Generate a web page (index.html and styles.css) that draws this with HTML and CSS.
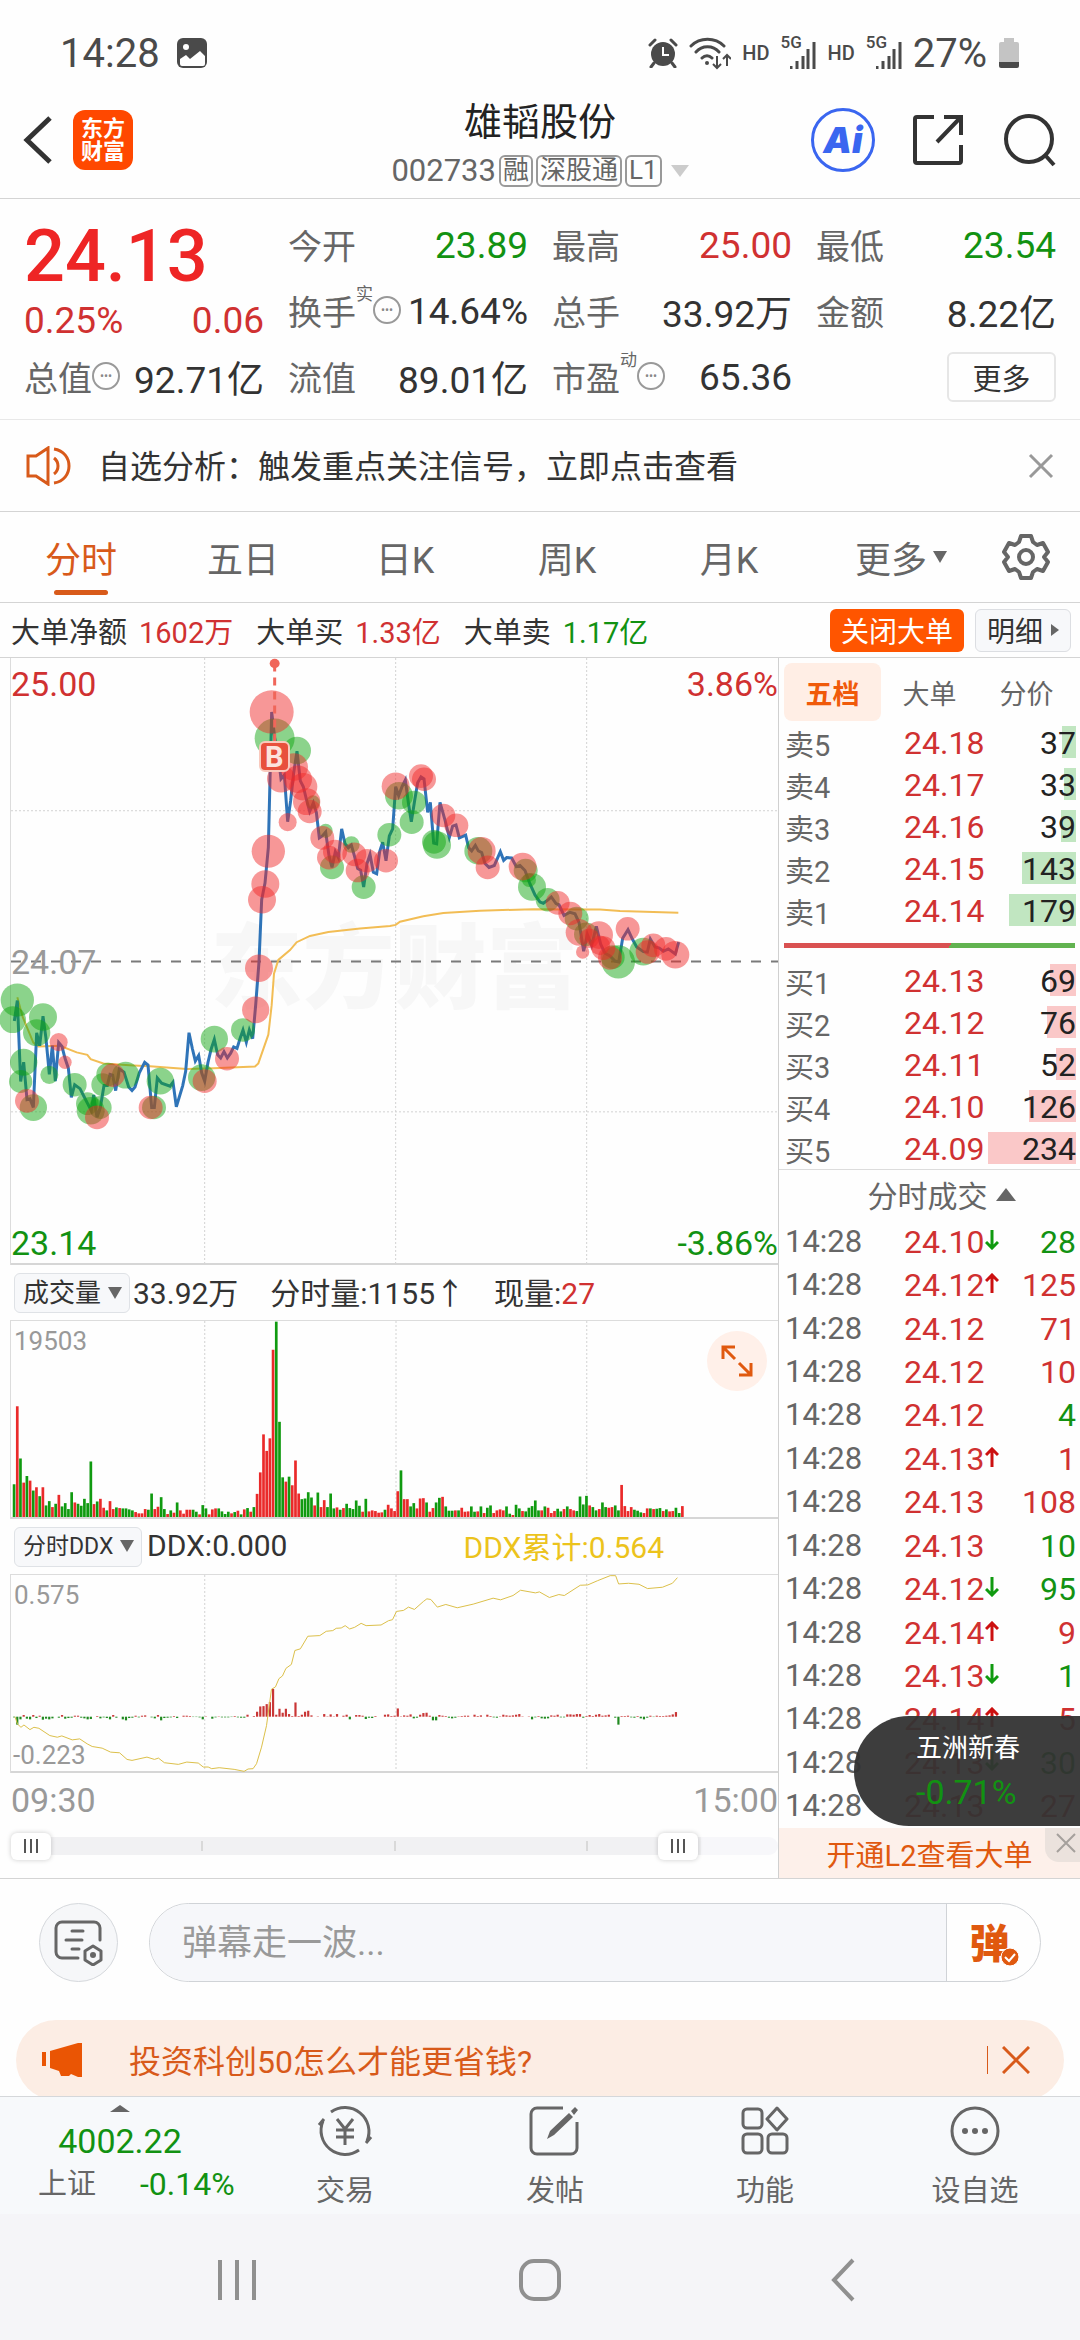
FILE: index.html
```html
<!DOCTYPE html>
<html lang="zh-CN">
<head>
    <meta charset="UTF-8">
    <meta name="viewport" content="width=device-width, initial-scale=1.0">
    <title>雄韬股份 002733</title>
    <link rel="stylesheet" href="styles.css">
</head>
<body>

    <div class="status-bar">
        <div class="status-left">
            <span>14:28</span>
            <svg width="32" height="32" viewBox="0 0 32 32"><rect x="1" y="1" width="30" height="30" rx="6" fill="#4a4a4a"/><circle cx="10" cy="10" r="3" fill="#fff"/><path d="M4 22l6-4 4 4 10-8 5 5v8a2 2 0 0 1-2 2H6a2 2 0 0 1-2-2z" fill="#fff"/></svg>
        </div>
        <div class="status-right">
            <svg width="30" height="30" viewBox="0 0 30 30"><circle cx="15" cy="16" r="12" fill="#4a4a4a"/><path d="M2 7l5-5M28 7l-5-5M6 25l-3 4M24 25l3 4" stroke="#4a4a4a" stroke-width="3" stroke-linecap="round"/><path d="M15 9v8h6" fill="none" stroke="#fff" stroke-width="2"/></svg>
            <svg width="42" height="34" viewBox="0 0 42 34"><g fill="none" stroke="#4a4a4a" stroke-width="3" stroke-linecap="round"><path d="M2 10c9-9 24-9 33 0M7 16c6-7 17-7 23 0M13 22c3-3 7-3 10 0"/></g><circle cx="18" cy="27" r="2" fill="#4a4a4a"/><path d="M28 20v12M24 28l4 4 4-4M38 30V19M34 23l4-4 4 4" fill="none" stroke="#4a4a4a" stroke-width="2"/></svg>
            <span class="hd">HD</span>
            <span class="signal"><span>5G</span><svg width="26" height="28" viewBox="0 0 26 28"><path d="M1 25v3M7 20v8M13 15v13M18 8v20M24 1v27" stroke="#4a4a4a" stroke-width="3"/></svg></span>
            <span class="hd">HD</span>
            <span class="signal"><span>5G</span><svg width="26" height="28" viewBox="0 0 26 28"><path d="M1 25v3M7 20v8M13 15v13M18 8v20M24 1v27" stroke="#4a4a4a" stroke-width="3"/></svg></span>
            <span>27%</span>
            <svg width="22" height="32" viewBox="0 0 22 32"><path d="M6 1h10v4h3a2 2 0 0 1 2 2v18H1V7a2 2 0 0 1 2-2h3z" fill="#c4c4c4"/><path d="M1 25h20v4a2 2 0 0 1-2 2H3a2 2 0 0 1-2-2z" fill="#4a4a4a"/></svg>
        </div>
    </div>

    <header class="header">
        <div class="header-left">
            <button class="icon-btn" aria-label="返回"><svg width="30" height="52" viewBox="0 0 30 52"><path d="M27 4L4 26l23 22" fill="none" stroke="#333" stroke-width="5"/></svg></button>
            <a class="logo" href="#">东方<br>财富</a>
        </div>
        <div class="stock-title">
            <h1>雄韬股份</h1>
            <p><span>002733</span><span class="tag">融</span><span class="tag">深股通</span><span class="tag">L1</span><i class="tri-down light"></i></p>
        </div>
        <div class="header-right">
            <button class="ai-btn">Ai</button>
            <button class="icon-btn" aria-label="分享"><svg width="52" height="52" viewBox="0 0 52 52"><path d="M21 3H4a2 2 0 0 0-2 2v42a2 2 0 0 0 2 2h42a2 2 0 0 0 2-2V31M31 3h17v18M48 3L24 28" fill="none" stroke="#333" stroke-width="4"/></svg></button>
            <button class="icon-btn" aria-label="搜索"><svg width="54" height="54" viewBox="0 0 54 54"><circle cx="26" cy="26" r="23" fill="none" stroke="#333" stroke-width="4"/><path d="M42 42l9 10" stroke="#333" stroke-width="4"/></svg></button>
        </div>
    </header>

    <section class="quote">
        <div class="price-box">
            <div class="price">24.13</div>
            <div class="change"><span>0.25%</span><span>0.06</span></div>
        </div>
        <div class="item"><span>今开</span><b class="green">23.89</b></div>
        <div class="item"><span>最高</span><b class="red">25.00</b></div>
        <div class="item"><span>最低</span><b class="green">23.54</b></div>
        <div class="item"><span>换手<sup>实</sup><i class="dots">•••</i></span><b>14.64%</b></div>
        <div class="item"><span>总手</span><b>33.92万</b></div>
        <div class="item"><span>金额</span><b>8.22亿</b></div>
        <div class="item"><span>总值<i class="dots">•••</i></span><b>92.71亿</b></div>
        <div class="item"><span>流值</span><b>89.01亿</b></div>
        <div class="item"><span>市盈<sup>动</sup><i class="dots">•••</i></span><b>65.36</b></div>
        <div class="item end"><button class="more-btn">更多</button></div>
    </section>

    <section class="notice">
        <svg width="46" height="40" viewBox="0 0 46 40"><g fill="none" stroke="#d85a1a" stroke-width="3"><path d="M2 10h8L22 2v36L10 30H2zM28 12a10 10 0 0 1 0 16M28 3c20 3 20 31 0 34"/></g></svg>
        <a href="#">自选分析：触发重点关注信号，立即点击查看</a>
        <button class="icon-btn" aria-label="关闭"><svg width="26" height="26" viewBox="0 0 26 26"><path d="M2 2l22 22M24 2L2 24" stroke="#999" stroke-width="3"/></svg></button>
    </section>

    <nav class="tabs">
        <button class="active">分时</button>
        <button>五日</button>
        <button>日K</button>
        <button>周K</button>
        <button>月K</button>
        <button class="tab-more">更多<i class="tri-down small"></i></button>
        <button aria-label="设置"><svg width="48" height="48" viewBox="0 0 48 48"><g fill="none" stroke="#666" stroke-width="4" stroke-linejoin="round"><path d="M19 3h10l2 6 4 3 6-2 5 9-4 5 4 5-5 9-6-2-4 3-2 6H19l-2-6-4-3-6 2-5-9 4-5-4-5 5-9 6 2 4-3z"/><circle cx="24" cy="24" r="7"/></g></svg></button>
    </nav>

    <div class="big-order">
        <span>大单净额</span><em class="red">1602万</em>
        <span>大单买</span><em class="red">1.33亿</em>
        <span>大单卖</span><em class="green">1.17亿</em>
        <button class="close-order">关闭大单</button>
        <button class="detail">明细<i class="tri-right"></i></button>
    </div>

    <main class="main">
        <div class="charts">
            <div class="chart price-chart">
                <div class="watermark">东方财富</div>
                <svg id="price-svg" viewBox="33 18 2301 1537" preserveAspectRatio="none">
                    <g class="grid"><path d="M614 18V1555M1187 18V1555M1760 18V1555M33 406H2334M33 1171H2334"/></g>
                    <path class="middle" d="M33 789H2334"/>
                    <polyline id="avg-line"/>
                    <polyline id="price-line"/>
                    <g id="bubbles"></g>
                    <path class="mark-line" d="M824 32V232"/>
                    <ellipse cx="824" cy="32" rx="15" ry="12" fill="#f0665a"/>
                </svg>
                <span class="mark">B</span>
                <span class="label top left red">25.00</span>
                <span class="label top right red">3.86%</span>
                <span class="label mid left">24.07</span>
                <span class="label bottom left green">23.14</span>
                <span class="label bottom right green">-3.86%</span>
            </div>

            <div class="sub-head">
                <div class="select"><select aria-label="指标一"><option>成交量</option></select></div>
                <span>33.92万</span>
                <span class="volume-now">分时量:1155↑</span>
                <span class="volume-last">现量:<em class="red">27</em></span>
            </div>
            <div class="chart sub-chart">
                <svg id="volume-svg" viewBox="22 181 1540 593" preserveAspectRatio="none">
                    <g class="grid"><path d="M411 181V774M795 181V774M1178 181V774"/></g>
                </svg>
                <span class="small-label first">19503</span>
                <button class="expand" aria-label="放大"><svg width="32" height="32" viewBox="0 0 32 32"><path d="M2 14V2h12M3 3l11 11M30 18v12H18M29 29L18 18" fill="none" stroke="#e0590f" stroke-width="3"/></svg></button>
            </div>

            <div class="sub-head">
                <div class="select narrow"><select aria-label="指标二"><option>分时DDX</option></select></div>
                <span>DDX:0.000</span>
                <span class="ddx-sum">DDX累计:0.564</span>
            </div>
            <div class="chart sub-chart">
                <svg id="ddx-svg" viewBox="22 -20 1540 592" preserveAspectRatio="none">
                    <g class="grid"><path d="M411 -20V572M795 -20V572M1178 -20V572"/></g>
                    <g id="ddx-bars"></g>
                    <polyline id="ddx-line"/>
                </svg>
                <span class="small-label">0.575</span>
                <span class="small-label last">-0.223</span>
            </div>

            <div class="time-axis"><span>09:30</span><span>15:00</span></div>
            <div class="range">
                <div class="track"><i></i><i></i><i></i></div>
                <input type="range" min="0" max="100" value="0" aria-label="开始时间">
                <input type="range" min="0" max="100" value="89" aria-label="结束时间">
            </div>
        </div>

        <aside class="side">
            <div class="side-tabs">
                <button class="active">五档</button>
                <button>大单</button>
                <button>分价</button>
            </div>
            <table class="book" id="sell"></table>
            <div class="ratio"></div>
            <table class="book buy" id="buy"></table>
            <button class="trade-title">分时成交<i class="tri-up"></i></button>
            <div class="trades">
                <table id="trades"></table>
            </div>
            <div class="l2">
                <a href="#">开通L2查看大单</a>
                <button aria-label="关闭"><svg width="20" height="20" viewBox="0 0 20 20"><path d="M1 1l18 18M19 1L1 19" stroke="#a5a09c" stroke-width="2"/></svg></button>
            </div>
            <a class="float" href="#"><span>五洲新春</span><b>-0.71%</b></a>
        </aside>
    </main>

    <form class="comment">
        <button type="button" class="round" aria-label="弹幕设置"><svg width="50" height="46" viewBox="0 0 50 46"><g fill="none" stroke="#666" stroke-width="3" stroke-linecap="round"><path d="M24 38H8a6 6 0 0 1-6-6V8a6 6 0 0 1 6-6h32a6 6 0 0 1 6 6v12M18 11h11M12 20h16M18 29h7"/><path d="M39 26l8 5v9l-8 5-8-5v-9z" stroke-linejoin="round"/></g><circle cx="39" cy="35" r="3" fill="#666"/></svg></button>
        <div class="comment-box">
            <input type="text" placeholder="弹幕走一波..." aria-label="弹幕">
            <button type="button" class="danmu">弹<svg width="20" height="20" viewBox="0 0 20 20"><circle cx="10" cy="10" r="9" fill="#e0590f" stroke="#fff"/><path d="M5 10l4 4 6-7" fill="none" stroke="#fff" stroke-width="2"/></svg></button>
        </div>
    </form>

    <div class="promo-wrap">
        <div class="promo">
            <svg width="42" height="36" viewBox="0 0 42 36"><path d="M2 10v14" stroke="#ea5504" stroke-width="4"/><path d="M8 9L36 1h4v34h-4l-7-3-2 2h-8l-2-5-9-3z" fill="#ea5504"/></svg>
            <a href="#">投资科创50怎么才能更省钱?</a>
            <button aria-label="关闭"><svg width="28" height="28" viewBox="0 0 28 28"><path d="M1 1l26 26M27 1L1 27" stroke="#d85a1a" stroke-width="3"/></svg></button>
        </div>
    </div>

    <nav class="bottom-nav">
        <a class="index" href="#">
            <i class="tri-up tiny"></i>
            <b>4002.22</b>
            <span>上证<em>-0.14%</em></span>
        </a>
        <a href="#">
            <svg width="58" height="52" viewBox="0 0 58 52"><g fill="none" stroke="#666" stroke-width="3"><path d="M15 7a24 24 0 0 1 36 29M50 38l5-6M43 45A24 24 0 0 1 7 16M8 14l-5 6"/><path d="M21 14l8 10 8-10M29 24v16M20 25h18M20 32h18"/></g></svg>
            <span>交易</span>
        </a>
        <a href="#">
            <svg width="52" height="52" viewBox="0 0 52 52"><path d="M34 3H8a6 6 0 0 0-6 6v34a6 6 0 0 0 6 6h34a6 6 0 0 0 6-6V17" fill="none" stroke="#666" stroke-width="3"/><path d="M42 6l4-4 3 3-4 5zM18 34l3-8L40 8l4 4-19 18z" fill="#666"/></svg>
            <span>发帖</span>
        </a>
        <a href="#">
            <svg width="48" height="52" viewBox="0 0 48 52"><g fill="none" stroke="#666" stroke-width="3"><rect x="2" y="4" width="19" height="19" rx="4"/><rect x="2" y="29" width="19" height="19" rx="4"/><rect x="27" y="29" width="19" height="19" rx="4"/><path d="M36 3l10 11-10 11-10-11z" stroke-linejoin="round"/></g></svg>
            <span>功能</span>
        </a>
        <a href="#">
            <svg width="52" height="52" viewBox="0 0 52 52"><circle cx="26" cy="26" r="23" fill="none" stroke="#666" stroke-width="3"/><g fill="#666"><circle cx="16" cy="26" r="3"/><circle cx="26" cy="26" r="3"/><circle cx="36" cy="26" r="3"/></g></svg>
            <span>设自选</span>
        </a>
    </nav>

    <div class="system-nav">
        <button aria-label="最近任务"><svg width="40" height="42" viewBox="0 0 40 42"><path d="M3 1v40M20 1v40M37 1v40" stroke="#909090" stroke-width="4"/></svg></button>
        <button aria-label="主页"><svg width="44" height="44" viewBox="0 0 44 44"><rect x="3" y="3" width="38" height="38" rx="13" fill="none" stroke="#909090" stroke-width="4"/></svg></button>
        <button aria-label="返回"><svg width="26" height="44" viewBox="0 0 26 44"><path d="M23 2L4 22l19 20" fill="none" stroke="#909090" stroke-width="4"/></svg></button>
    </div>

    <script src="script.js"></script>
</body>
</html>
```
FILE: styles.css
```css
* {
    box-sizing: border-box;
}
body {
    margin: 0;
    background: #fefefe;
    color: #333;
    font-family: Roboto, "Noto Sans CJK SC", sans-serif;
}
button {
    border: none;
    padding: 0;
    background: none;
    color: inherit;
    font-family: inherit;
    cursor: pointer;
}
a {
    color: inherit;
    text-decoration: none;
}
em, i, b {
    font-style: normal;
    font-weight: normal;
}
svg {
    display: block;
}
.red {
    color: #d03131;
}
.green {
    color: #129212;
}

/* triangles */
.tri-down, .tri-up, .tri-right {
    display: inline-block;
    border: 8px solid transparent;
}
.tri-down {
    border-top: 12px solid #666;
    border-bottom: none;
}
.tri-down.light {
    border-width: 12px 9px 0;
    border-top-color: #ccc;
    margin-left: 6px;
}
.tri-down.small {
    border-width: 12px 7px 0;
    margin-left: 6px;
}
.tri-up {
    border-bottom: 13px solid #666;
    border-top: none;
    border-left-width: 10px;
    border-right-width: 10px;
}
.tri-right {
    border-width: 6px 0 6px 8px;
    border-left-color: #666;
}

/* status bar */
.status-bar {
    display: flex;
    justify-content: space-between;
    align-items: center;
    height: 96px;
    padding: 10px 60px 0;
    color: #4a4a4a;
    font-size: 40px;
}
.status-left, .status-right {
    display: flex;
    align-items: center;
}
.status-left {
    gap: 16px;
}
.status-right {
    gap: 11px;
}
.hd {
    font-size: 20px;
    font-weight: 500;
}
.signal {
    position: relative;
    padding-left: 10px;
    padding-top: 4px;
}
.signal span {
    position: absolute;
    left: 0;
    top: -5px;
    font-size: 17px;
    font-weight: 500;
}

/* header */
.header {
    display: grid;
    grid-template-columns: 1fr auto 1fr;
    height: 103px;
    border-bottom: 1px solid #d4d4d4;
}
.header-left, .header-right {
    display: flex;
    align-items: center;
    height: 88px;
}
.header-left {
    padding-left: 23px;
    gap: 20px;
}
.header-right {
    justify-content: flex-end;
    padding-right: 23px;
    gap: 38px;
}
.logo {
    width: 60px;
    height: 60px;
    padding-top: 7px;
    border-radius: 12px;
    background: #ff4800;
    color: #fff;
    font-size: 22px;
    font-weight: bold;
    line-height: 23px;
    text-align: center;
}
.stock-title {
    text-align: center;
}
.stock-title h1 {
    margin: 0;
    color: #222;
    font-size: 38px;
    font-weight: normal;
    line-height: 52px;
}
.stock-title p {
    display: flex;
    align-items: center;
    justify-content: center;
    gap: 3px;
    margin: 0;
    color: #666;
    font-size: 31px;
    line-height: 46px;
}
.tag {
    height: 32px;
    padding: 0 2px;
    border: 2px solid #999;
    border-radius: 6px;
    font-size: 26px;
    line-height: 27px;
}
.ai-btn {
    width: 64px;
    height: 64px;
    border: 3px solid #3a66f0;
    border-radius: 50%;
    color: #3a66f0;
    font-family: Inter, sans-serif;
    font-size: 36px;
    font-style: italic;
    font-weight: 900;
}

/* quote */
.quote {
    display: grid;
    grid-template-columns: repeat(4, 1fr);
    grid-auto-rows: 66px;
    column-gap: 24px;
    padding: 13px 24px 9px;
    border-bottom: 1px solid #e8e8e8;
}
.price-box {
    grid-row: span 2;
    padding-top: 7px;
    color: #d03131;
}
.price {
    color: #ee2525;
    font-size: 72px;
    font-weight: 500;
    line-height: 76px;
}
.change {
    display: flex;
    justify-content: space-between;
    font-size: 37px;
    line-height: 52px;
}
.item {
    display: flex;
    align-items: center;
    justify-content: space-between;
    white-space: nowrap;
}
.item span {
    display: flex;
    align-items: center;
    padding-bottom: 2px;
    color: #666;
    font-size: 34px;
}
.item b {
    font-size: 37px;
}
.item sup {
    align-self: flex-start;
    font-size: 17px;
    line-height: 17px;
}
.dots {
    flex: none;
    width: 28px;
    height: 28px;
    border: 2px solid #999;
    border-radius: 50%;
    color: #888;
    font-size: 12px;
    line-height: 24px;
    text-align: center;
    display: flex;
    justify-content: center;
}
.item.end {
    justify-content: flex-end;
}
.more-btn {
    width: 109px;
    height: 50px;
    border: 2px solid #e6e6e6;
    border-radius: 6px;
    font-size: 29px;
}

/* notice */
.notice {
    display: flex;
    align-items: center;
    height: 92px;
    padding: 0 26px;
    border-bottom: 1px solid #d4d4d4;
    font-size: 32px;
}
.notice a {
    flex: 1;
    margin-left: 26px;
    padding-bottom: 4px;
}

/* period tabs */
.tabs {
    display: grid;
    grid-template-columns: repeat(6, 3fr) 2fr;
    height: 91px;
    border-bottom: 1px solid #d4d4d4;
}
.tabs button {
    position: relative;
    display: flex;
    align-items: center;
    justify-content: center;
    color: #666;
    font-size: 36px;
}
.tabs .tab-more {
    padding-left: 20px;
}
.tabs .active {
    color: #d85a1a;
}
.tabs .active::after {
    content: "";
    position: absolute;
    bottom: 7px;
    width: 54px;
    height: 5px;
    border-radius: 3px;
    background: #d85a1a;
}

.big-order {
    display: flex;
    align-items: center;
    height: 55px;
    padding: 0 9px 0 11px;
    border-bottom: 1px solid #d4d4d4;
    font-size: 29px;
}
.big-order em {
    margin: 0 23px 0 12px;
}
.big-order button {
    height: 43px;
    border-radius: 6px;
    font-size: 28px;
}
.close-order {
    margin-left: auto;
    width: 134px;
    background: #ff5500;
    color: #fff;
}
.detail {
    display: flex;
    align-items: center;
    justify-content: center;
    gap: 8px;
    width: 96px;
    margin-left: 11px;
    border: 1px solid #dcdee2;
    background: #f7f8fa;
}

/* charts */
.main {
    display: grid;
    grid-template-columns: minmax(0, 1fr) 302px;
    border-bottom: 1px solid #d4d4d4;
}
.charts {
    padding-left: 11px;
}
.chart {
    position: relative;
    border-bottom: 2px solid #d6d6d6;
    box-shadow: -1px 0 #dcdcdc;
}
.chart > svg {
    position: relative;
    width: 100%;
    height: 100%;
    overflow: visible;
}
.chart polyline, .chart > svg path {
    fill: none;
    vector-effect: non-scaling-stroke;
}
.grid path {
    stroke: #d2d2d2;
    stroke-dasharray: 2 2;
}
.price-chart {
    height: 607px;
    font-size: 34px;
}
.sub-chart {
    height: 199px;
    border-top: 1px solid #dcdcdc;
}
.middle {
    stroke: #7a7a7a;
    stroke-width: 2px;
    stroke-dasharray: 10 10;
}
#avg-line {
    stroke: #f2bd55;
    stroke-width: 2px;
}
#price-line {
    stroke: #2f74b8;
    stroke-width: 3px;
}
#ddx-line {
    stroke: #dcc04a;
    stroke-width: 1px;
}
.mark-line {
    stroke: #f0665a;
    stroke-width: 3px;
    stroke-dasharray: 8 6;
}
.mark {
    position: absolute;
    left: 34%;
    top: 16%;
    width: 31px;
    height: 31px;
    margin-left: -13px;
    margin-top: -14px;
    border: 2px solid #f9c9bd;
    border-radius: 6px;
    background: #e8503c;
    color: #fce3dd;
    font-size: 29px;
    font-weight: bold;
    line-height: 28px;
    text-align: center;
}
.watermark {
    position: absolute;
    inset: 0;
    display: flex;
    align-items: center;
    justify-content: center;
    color: #f7f7f7;
    font-size: 92px;
    font-weight: 900;
}
.label {
    position: absolute;
    line-height: 40px;
}
.label.left {
    left: 0;
}
.label.right {
    right: 0;
}
.label.top {
    top: 6px;
}
.label.mid {
    top: 50%;
    margin-top: -19px;
    color: #999;
}
.label.bottom {
    bottom: 0;
}
.small-label {
    position: absolute;
    left: 3px;
    top: 4px;
    color: #999;
    font-size: 26px;
    line-height: 32px;
}
.small-label.last {
    top: auto;
    bottom: 0;
    left: 2px;
}
.expand {
    position: absolute;
    top: 10px;
    right: 11px;
    display: flex;
    align-items: center;
    justify-content: center;
    width: 60px;
    height: 60px;
    border-radius: 50%;
    background: #fff0e9;
}
.sub-head {
    position: relative;
    display: flex;
    align-items: center;
    height: 55px;
    padding-left: 3px;
    font-size: 30px;
    white-space: nowrap;
}
.sub-head span {
    padding-bottom: 3px;
}
.select {
    position: relative;
    margin-right: 3px;
}
.select select {
    appearance: none;
    width: 116px;
    height: 40px;
    padding: 0 0 0 8px;
    border: 1px solid #dfe2e6;
    border-radius: 6px;
    background: #f7f8fa;
    color: #333;
    font-family: inherit;
    font-size: 26px;
}
.select.narrow {
    margin-right: 5px;
}
.select.narrow select {
    width: 128px;
    font-size: 23px;
}
.select::after {
    content: "";
    position: absolute;
    right: 8px;
    top: 14px;
    border: 7px solid transparent;
    border-top: 12px solid #666;
    border-bottom: none;
    pointer-events: none;
}
.volume-now {
    margin-left: 32px;
}
.volume-last {
    margin-left: 29px;
}
.ddx-sum {
    margin-left: auto;
    margin-right: 114px;
    color: #ecc31c;
}
.time-axis {
    display: flex;
    justify-content: space-between;
    color: #999;
    font-size: 34px;
    line-height: 54px;
}
.range {
    position: relative;
    height: 51px;
}
.track {
    display: flex;
    justify-content: space-evenly;
    align-items: center;
    position: absolute;
    left: 0;
    right: 0;
    top: 10px;
    height: 18px;
    border-radius: 9px;
    background: linear-gradient(to right, #f1f1f3 90%, #f7f7fa 90%);
}
.track i {
    width: 2px;
    height: 10px;
    background: #d9d9d9;
}
.range input {
    appearance: none;
    position: absolute;
    left: 0;
    top: 0;
    width: 100%;
    height: 38px;
    margin: 0;
    background: none;
    pointer-events: none;
}
.range input::-webkit-slider-thumb {
    appearance: none;
    width: 40px;
    height: 27px;
    border-radius: 6px;
    background:
        linear-gradient(#555, #555) 13px 6px / 2px 14px no-repeat,
        linear-gradient(#555, #555) 19px 6px / 2px 14px no-repeat,
        linear-gradient(#555, #555) 25px 6px / 2px 14px no-repeat,
        #fff;
    box-shadow: 0 0 5px rgba(0, 0, 0, 0.2);
    pointer-events: auto;
}

/* right side */
.side {
    position: relative;
    display: flex;
    flex-direction: column;
    border-left: 1px solid #d0d0d0;
}
.side-tabs {
    display: grid;
    grid-template-columns: repeat(3, 1fr);
    height: 63px;
    padding: 5px 5px 0;
}
.side-tabs button {
    border-radius: 8px;
    color: #666;
    font-size: 27px;
}
.side-tabs .active {
    background: #ffeee5;
    color: #f05a0a;
    font-weight: bold;
}
.side table {
    width: 100%;
    border-collapse: collapse;
    table-layout: fixed;
}
.side td {
    padding: 0;
}
.side td:first-child {
    width: 125px;
    padding-left: 6px;
    color: #666;
    white-space: nowrap;
}
.side td:nth-child(2) {
    width: 98px;
    white-space: nowrap;
}
.side td:last-child {
    padding-right: 4px;
    text-align: right;
}
.book td {
    height: 42px;
    color: #d03131;
    font-size: 32px;
    line-height: 32px;
}
.side .book td {
    padding-top: 2px;
}
.side .book td:first-child {
    padding-top: 8px;
    font-size: 29px;
}
.book .amount {
    position: relative;
    display: block;
    height: 32px;
    color: #222;
}
.book .amount i {
    position: absolute;
    right: 0;
    top: -1px;
    height: 32px;
    background: #c1e6c1;
}
.book.buy .amount i {
    background: #fac8c8;
}
.book .amount span {
    position: relative;
}
.ratio {
    height: 5px;
    margin: 12px 5px 11px;
    background: linear-gradient(120deg, #d95151 57%, #62b350 57%);
}
.trade-title {
    height: 51px;
    padding-left: 24px;
    padding-bottom: 2px;
    border-top: 1px solid #dcdcdc;
    color: #666;
    font-size: 30px;
}
.trade-title .tri-up {
    margin-left: 8px;
    vertical-align: 6px;
}
.trades {
    flex: 1;
}
.trades table {
    height: 100%;
}
.trades td {
    height: 43px;
    font-size: 32px;
    line-height: 36px;
}
.trades td:first-child {
    font-size: 31px;
}
.trades svg {
    display: inline-block;
    margin-left: 1px;
    vertical-align: 3px;
}
.l2 {
    position: relative;
    height: 50px;
    background: #fdf0ea;
    color: #e0590f;
    font-size: 29px;
    line-height: 56px;
    text-align: center;
}
.l2 button {
    position: absolute;
    top: 0;
    right: 0;
    width: 35px;
    height: 34px;
    padding: 0 0 4px 11px;
    border-bottom-left-radius: 14px;
    background: #ebe2dd;
}
.float {
    position: absolute;
    right: 0;
    bottom: 52px;
    width: 226px;
    height: 110px;
    padding: 10px 0 0 62px;
    border-radius: 55px 0 0 55px;
    background: rgba(51, 51, 51, 0.95);
    color: #fff;
    font-size: 26px;
    line-height: 44px;
}
.float b {
    display: block;
    color: #129212;
    font-size: 34px;
}

/* comment */
.comment {
    display: flex;
    gap: 31px;
    margin: 0;
    padding: 24px 39px 38px;
}
.round {
    display: flex;
    align-items: center;
    justify-content: center;
    width: 79px;
    height: 79px;
    border: 1px solid #d5d8dc;
    border-radius: 50%;
    background: #f6f7f9;
}
.comment-box {
    flex: 1;
    display: flex;
    height: 79px;
    overflow: hidden;
    border: 1px solid #d0d3d7;
    border-radius: 40px;
}
.comment-box input {
    flex: 1;
    min-width: 0;
    padding: 2px 32px 0;
    border: none;
    outline: none;
    background: #f6f7fa;
    font-family: inherit;
    font-size: 35px;
}
.comment-box input::placeholder {
    color: #999;
}
.danmu {
    position: relative;
    width: 94px;
    padding: 0 8px 4px 0;
    border-left: 1px solid #d0d3d7;
    color: #e0590f;
    font-size: 40px;
    font-weight: 900;
}
.danmu svg {
    position: absolute;
    right: 20px;
    bottom: 14px;
}

.promo-wrap {
    height: 76px;
    padding: 0 16px;
    overflow: hidden;
}
.promo {
    display: flex;
    align-items: center;
    height: 80px;
    padding: 0 34px 0 26px;
    border-radius: 40px;
    background: #fcede4;
    color: #d85a1a;
    font-size: 32px;
}
.promo a {
    flex: 1;
    margin-left: 45px;
    padding-bottom: 3px;
}
.promo button {
    padding-left: 14px;
    border-left: 1px solid #d85a1a;
}

/* bottom */
.bottom-nav {
    display: grid;
    grid-template-columns: 8fr repeat(4, 7fr);
    height: 118px;
    border-top: 1px solid #d5d7da;
    background: #f7f9fb;
}
.bottom-nav a {
    display: flex;
    flex-direction: column;
    align-items: center;
    padding-top: 8px;
    color: #666;
    font-size: 29px;
    line-height: 36px;
}
.bottom-nav svg {
    flex: none;
    margin-bottom: 16px;
}
.bottom-nav .index b {
    margin-top: 8px;
    color: #129212;
    font-size: 34px;
    line-height: 42px;
}
.index span {
    display: flex;
    align-items: center;
    align-self: flex-start;
    gap: 44px;
    padding-left: 38px;
    line-height: 44px;
    white-space: nowrap;
}
.index em {
    color: #129212;
    font-size: 32px;
}
.tri-up.tiny {
    border-bottom-width: 7px;
}
.system-nav {
    display: grid;
    grid-template-columns: repeat(3, 1fr);
    height: 126px;
    padding: 5px 85px 0;
    background: #f5f5f8;
}
.system-nav button {
    display: flex;
    align-items: center;
    justify-content: center;
}
```
FILE: script.js
```js
const RED = '#ea2a2a';
const GREEN = '#109a10';

const priceLine = '43,940 52,888 62,1094 71,1045 81,1140 90,1138 100,1160 110,970 119,1003 129,928 138,985 148,1076 157,1003 166,1093 176,995 186,1005 195,1035 205,1060 214,1134 224,1102 240,1112 252,1132 264,1152 274,1168 281,1128 291,1185 301,1160 312,1104 322,1104 330,1076 338,1078 347,1117 358,1062 372,1070 386,1108 396,1117 405,1108 418,1072 434,1045 444,1052 455,1160 463,1160 472,1085 485,1098 510,1106 519,1096 529,1158 548,1105 557,1068 567,970 577,1010 586,1042 596,1028 605,1072 614,1093 624,1045 634,1010 643,987 653,1026 662,1034 672,1018 682,1034 692,1022 701,1006 711,1010 720,985 729,963 739,994 748,963 758,985 767,900 777,790 785,632 795,590 805,500 815,155 824,220 834,260 843,325 853,315 863,434 872,380 881,310 891,255 901,330 910,345 920,380 929,408 940,386 949,410 958,475 967,470 977,460 987,520 996,550 1006,510 1015,525 1025,452 1035,490 1045,500 1054,493 1063,520 1073,553 1082,557 1091,600 1101,540 1110,517 1120,562 1130,566 1139,510 1148,486 1158,533 1168,470 1178,452 1187,345 1196,368 1206,345 1216,328 1225,385 1234,434 1244,380 1253,335 1263,320 1272,325 1283,410 1291,385 1301,488 1310,490 1320,385 1335,430 1348,474 1358,445 1368,442 1378,475 1397,468 1406,500 1415,508 1426,494 1435,508 1445,512 1455,540 1467,550 1483,545 1501,510 1511,532 1520,525 1535,526 1549,548 1560,545 1575,558 1590,592 1605,620 1620,638 1630,641 1645,632 1654,625 1668,642 1677,645 1692,672 1710,664 1725,668 1737,690 1743,720 1751,763 1762,720 1775,748 1789,700 1802,745 1815,768 1830,775 1845,788 1856,790 1868,730 1884,708 1897,732 1910,752 1930,764 1942,765 1951,732 1965,752 1978,755 1990,763 2005,757 2026,770 2036,740';
const avgLine = '52,880 68,930 100,995 115,1005 180,1003 230,1020 262,1026 272,1037 310,1048 400,1053 450,1055 560,1062 640,1060 765,1056 775,1048 805,975 815,900 822,820 835,785 870,760 890,740 930,724 985,714 1080,705 1170,699 1187,696 1200,688 1270,674 1330,666 1440,660 1600,656 1800,657 1860,661 2035,665';
const ddxLine = '30,408 35,430 42,440 48,433 60,447 68,440 78,443 100,465 115,470 124,466 145,478 160,475 175,490 185,498 205,503 222,515 240,517 255,537 265,540 295,530 310,537 318,533 330,547 358,552 375,545 398,548 408,560 418,560 425,565 440,562 470,567 490,573 498,566 508,565 515,550 525,500 535,435 545,325 553,318 560,293 567,285 574,262 585,250 592,208 603,203 618,165 642,163 655,150 668,148 675,141 685,140 693,133 702,143 712,138 725,126 735,133 765,131 780,118 788,115 796,90 810,87 820,77 832,84 850,60 857,52 865,54 878,77 895,69 918,79 950,68 990,50 1005,55 1030,42 1045,26 1075,34 1083,31 1103,48 1122,39 1133,42 1165,11 1180,10 1200,-3 1225,-18 1236,-18 1242,7 1262,5 1283,8 1300,21 1330,17 1350,5 1360,-12';

document.getElementById('price-line').setAttribute('points', priceLine);
document.getElementById('avg-line').setAttribute('points', avgLine);
document.getElementById('ddx-line').setAttribute('points', ddxLine);

// x, y, 半径
const greenBubbles = [[52,887,50],[38,937,40],[110,970,41],[129,930,42],[71,1045,41],[62,1094,35],[100,1160,41],[148,1077,27],[224,1102,36],[262,1150,34],[272,1168,42],[301,1160,34],[308,1102,34],[325,1076,36],[377,1078,41],[481,1093,41],[462,1160,36],[605,1084,41],[643,986,41],[729,963,36],[824,222,60],[891,253,42],[939,385,21],[977,457,21],[996,550,36],[1054,492,25],[1091,600,36],[1168,467,36],[1197,368,42],[1242,385,36],[1235,435,36],[1302,485,36],[1311,493,42],[1435,508,42],[1577,558,36],[1596,600,42],[1587,582,21],[1643,632,36],[1730,680,36],[1758,720,36],[1838,778,36],[1855,790,50],[1930,764,42]];
const redBubbles = [[81,1143,36],[176,994,27],[195,1045,20],[338,1078,36],[291,1185,36],[452,1160,36],[614,1093,36],[681,1036,36],[767,912,41],[777,806,42],[786,632,42],[796,592,42],[805,509,50],[815,155,66],[824,270,40],[843,325,42],[863,435,27],[882,295,42],[894,326,42],[910,345,42],[920,383,41],[929,408,36],[967,475,36],[987,525,36],[1005,510,36],[1063,517,36],[1073,558,36],[1101,533,36],[1158,533,36],[1187,344,42],[1263,318,36],[1272,326,36],[1330,418,36],[1369,443,36],[1445,508,42],[1463,550,36],[1568,548,42],[1673,640,36],[1711,667,36],[1737,715,40],[1748,765,20],[1768,730,30],[1797,722,42],[1800,748,30],[1810,755,36],[1830,780,36],[1883,706,36],[1943,765,36],[1960,748,36],[1998,757,36],[2026,772,42]];

function bubbles(list, color) {
    return list.map(b => `<ellipse cx="${b[0]}" cy="${b[1]}" rx="${b[2]}" ry="${Math.round(b[2] * 0.84)}" fill="${color}" fill-opacity="0.48"/>`).join('');
}
document.getElementById('bubbles').innerHTML = bubbles(greenBubbles, '#0ea50e') + bubbles(redBubbles, '#f02828');

// 成交量
const volume = 'g99 r335 g177 r104 g124 r110 g80 r90 g63 r90 g35 g48 r30 g40 r67 g32 g42 g24 g75 r44 g40 g34 g55 g42 g168 r39 g47 r55 r28 g20 r48 r24 g29 r27 g26 g26 g23 g20 r15 r11 r11 r24 g22 g71 r24 r31 g60 g24 r9 g20 r13 g44 r20 r10 r22 r22 g22 g16 r8 g36 g26 r8 r23 r26 g26 g17 g9 g16 r11 g15 r19 g8 r23 g27 r16 g30 r70 r135 r250 r200 r238 r506 g591 g288 g120 r107 g122 r96 r171 r71 g54 g56 g75 g59 r35 g74 r30 r51 g30 g71 g26 r29 g22 r27 g40 g27 g24 g50 g34 r16 g55 r17 r20 r18 r13 r14 g22 r37 r26 r18 r78 g141 r54 r54 g32 g42 r26 r56 r57 g44 r16 r27 g44 g58 r61 g32 g19 g19 r20 g20 r28 r16 r17 g32 g16 r17 g32 r12 g28 g35 r12 r20 r23 r20 g32 g10 r6 g37 g26 r18 g17 g28 g33 g50 g20 r20 g32 r28 r12 r18 g25 g17 r24 g32 r24 r20 g18 g62 g38 g64 r35 g30 g20 r24 g44 g30 r28 r30 g35 g20 r97 r33 r18 r30 g22 g19 g14 r12 r26 g26 r24 g25 g27 r18 g23 r17 r18 g28 g12 r33'.split(' ');
document.getElementById('volume-svg').insertAdjacentHTML('beforeend', volume.map((v, i) => {
    const h = Number(v.slice(1));
    return `<rect x="${(25.5 + i * 6.42).toFixed(1)}" y="${774 - h}" width="5.4" height="${h}" fill="${v[0] === 'r' ? RED : GREEN}"/>`;
}).join(''));

// DDX
const ddx = [-2,-24,-8,5,-6,-8,5,-4,3,-9,-6,-8,-5,0,-3,5,-6,-4,-3,3,3,-3,-5,-8,-7,0,2,-5,-2,-4,-8,5,-3,0,-8,-11,-4,-3,3,-2,3,4,0,-2,-5,5,-11,-4,-3,-2,2,-4,0,3,3,2,-1,-1,-2,-8,1,0,-6,-2,1,-2,-2,-2,-1,2,-2,-3,-3,6,0,2,15,31,32,38,44,84,6,24,12,24,8,2,43,2,6,15,18,4,0,1,0,8,1,7,1,8,0,3,6,-8,0,5,5,3,-7,-3,-4,2,0,0,6,7,2,3,25,1,4,3,7,-5,-3,6,11,12,3,-11,-11,5,3,2,-3,-5,-3,1,2,3,3,0,6,2,4,0,6,2,-2,-3,1,6,4,3,4,6,8,1,0,1,-8,-2,2,-5,-6,-5,4,3,6,-2,-2,7,7,6,8,8,-3,2,5,2,6,8,3,4,6,0,-3,-24,2,2,3,-2,-3,2,-5,-8,-3,3,-1,3,2,2,3,4,7,14];
document.getElementById('ddx-bars').innerHTML = ddx.map((v, i) => `<rect x="${(26 + i * 6.42).toFixed(1)}" y="${v > 0 ? 408 - v : 408}" width="4.4" height="${Math.abs(v)}" fill="${v > 0 ? '#c93636' : '#218a21'}"/>`).join('');

// 五档
function book(id, rows) {
    document.getElementById(id).innerHTML = rows.map(r =>
        `<tr><td>${r[0]}</td><td>${r[1]}</td><td><div class="amount"><i style="width:${Math.round(r[2] * 0.375)}px"></i><span>${r[2]}</span></div></td></tr>`
    ).join('');
}
book('sell', [['卖5', '24.18', 37], ['卖4', '24.17', 33], ['卖3', '24.16', 39], ['卖2', '24.15', 143], ['卖1', '24.14', 179]]);
book('buy', [['买1', '24.13', 69], ['买2', '24.12', 76], ['买3', '24.11', 52], ['买4', '24.10', 126], ['买5', '24.09', 234]]);

// 分时成交
const arrows = {
    up: '<svg width="14" height="20" viewBox="0 0 14 20"><path d="M7 20V2M1 8l6-6 6 6" fill="none" stroke="#cc1010" stroke-width="3"/></svg>',
    down: '<svg width="14" height="20" viewBox="0 0 14 20"><path d="M7 0v18M1 12l6 6 6-6" fill="none" stroke="#109a10" stroke-width="3"/></svg>'
};
const trades = [
    ['24.10', 'down', 28, 'green'],
    ['24.12', 'up', 125, 'red'],
    ['24.12', '', 71, 'red'],
    ['24.12', '', 10, 'red'],
    ['24.12', '', 4, 'green'],
    ['24.13', 'up', 1, 'red'],
    ['24.13', '', 108, 'red'],
    ['24.13', '', 10, 'green'],
    ['24.12', 'down', 95, 'green'],
    ['24.14', 'up', 9, 'red'],
    ['24.13', 'down', 1, 'green'],
    ['24.14', 'up', 5, 'red'],
    ['24.13', 'down', 30, 'green'],
    ['24.13', '', 27, 'red']
];
document.getElementById('trades').innerHTML = trades.map(t =>
    `<tr><td>14:28</td><td class="red">${t[0]}${arrows[t[1]] || ''}</td><td class="${t[3]}">${t[2]}</td></tr>`
).join('');
```
